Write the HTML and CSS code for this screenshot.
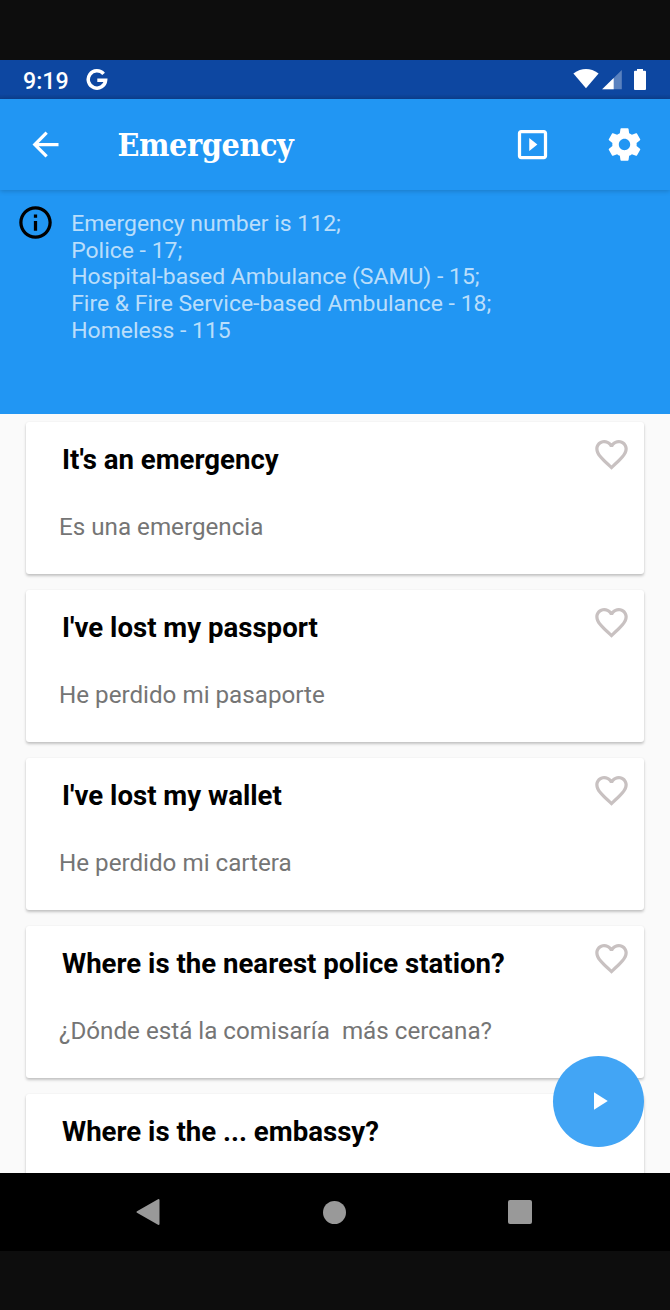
FILE: index.html
```html
<!DOCTYPE html>
<html lang="en">
<head>
<meta charset="utf-8">
<title>Emergency</title>
<link rel="stylesheet" href="styles.css">
</head>
<body>
<div class="device">
  <div class="status">
    <span class="clock">9:19</span>
    <svg class="google" width="22" height="22" viewBox="0 0 22 22"><path d="M17.600 4.900A8.700 8.700 0 1 0 19.600 11.300H11.300" fill="none" stroke="#fff" stroke-width="3.500"/></svg>
    <svg class="signals" width="76" height="24" viewBox="0 0 76 24">
      <path d="M.4 5.5Q13-3.4 25.6 5.5L13 20.3Z" fill="#fff"/>
      <path d="M48.8 2v19.2H29.2Z" fill="#fff" fill-opacity=".32"/>
      <path d="M40.7 9.9v11.3H29.2Z" fill="#fff"/>
      <path d="M64 1h6v1.8h2q1 0 1 1V21q0 1-1 1H62q-1 0-1-1V3.800q0-1 1-1h2Z" fill="#fff"/>
    </svg>
  </div>
  <header class="appbar">
    <svg class="icon" viewBox="0 0 24 24"><path d="M20 11H7.830l5.590-5.590L12 4l-8 8 8 8 1.410-1.410L7.830 13H20v-2z"/></svg>
    <h1 class="title">Emergency</h1>
    <svg class="icon slideshow" viewBox="0 0 24 24"><path d="M10 8v8l5-4-5-4zm9-5H5c-1.100 0-2 .9-2 2v14c0 1.100.9 2 2 2h14c1.100 0 2-.9 2-2V5c0-1.100-.9-2-2-2zm0 16H5V5h14v14z"/></svg>
    <svg class="icon" viewBox="0 0 24 24"><path d="M19.430 12.980c.04-.32.07-.64.07-.98s-.03-.66-.07-.98l2.110-1.650c.19-.15.24-.42.12-.64l-2-3.460c-.12-.22-.39-.3-.61-.22l-2.490 1c-.52-.4-1.080-.73-1.690-.98l-.38-2.650C14.460 2.180 14.250 2 14 2h-4c-.25 0-.46.18-.49.42l-.38 2.650c-.61.25-1.170.59-1.690.98l-2.490-1c-.23-.09-.49 0-.61.22l-2 3.460c-.13.22-.07.49.12.64l2.110 1.650c-.04.32-.07.65-.07.98s.03.66.07.98l-2.110 1.650c-.19.15-.24.42-.12.64l2 3.460c.12.22.39.3.61.22l2.490-1c.52.4 1.080.73 1.690.98l.38 2.650c.03.24.24.42.49.42h4c.25 0 .46-.18.49-.42l.38-2.650c.61-.25 1.170-.59 1.690-.98l2.490 1c.23.09.49 0 .61-.22l2-3.460c.12-.22.07-.49-.12-.64l-2.110-1.650zM12 15.500c-1.930 0-3.500-1.570-3.500-3.500s1.570-3.500 3.500-3.500 3.500 1.570 3.500 3.500-1.570 3.500-3.500 3.500z"/></svg>
  </header>
  <section class="info">
    <svg class="icon info-icon" viewBox="0 0 24 24"><path d="M11 17h2v-6h-2v6zm1-15C6.480 2 2 6.480 2 12s4.480 10 10 10 10-4.480 10-10S17.520 2 12 2zm0 18c-4.410 0-8-3.590-8-8s3.590-8 8-8 8 3.590 8 8-3.590 8-8 8zM11 9h2V7h-2v2z"/></svg>
    <p class="info-text">Emergency number is 112;<br>Police - 17;<br>Hospital-based Ambulance (SAMU) - 15;<br>Fire &amp; Fire Service-based Ambulance - 18;<br>Homeless - 115</p>
  </section>
  <svg class="defs" width="0" height="0"><symbol id="heart" viewBox="0 0 24 24"><path d="M16.500 3c-1.740 0-3.410.81-4.500 2.090C10.910 3.810 9.240 3 7.500 3 4.420 3 2 5.420 2 8.500c0 3.780 3.400 6.860 8.550 11.540L12 21.350l1.450-1.320C18.600 15.360 22 12.280 22 8.500 22 5.420 19.580 3 16.500 3zm-4.400 15.550l-.1.100-.1-.1C7.140 14.240 4 11.390 4 8.500 4 6.500 5.500 5 7.500 5c1.540 0 3.040.99 3.570 2.360h1.870C13.460 5.990 14.960 5 16.500 5c2 0 3.500 1.500 3.500 3.500 0 2.890-3.140 5.740-7.900 10.050z"/></symbol></svg>
  <main class="list">
    <article class="card"><h2 class="phrase">It's an emergency</h2><p class="translation">Es una emergencia</p><svg class="icon heart"><use href="#heart"/></svg></article>
    <article class="card"><h2 class="phrase">I've lost my passport</h2><p class="translation">He perdido mi pasaporte</p><svg class="icon heart"><use href="#heart"/></svg></article>
    <article class="card"><h2 class="phrase">I've lost my wallet</h2><p class="translation">He perdido mi cartera</p><svg class="icon heart"><use href="#heart"/></svg></article>
    <article class="card"><h2 class="phrase">Where is the nearest police station?</h2><p class="translation">¿Dónde está la comisaría&nbsp; más cercana?</p><svg class="icon heart"><use href="#heart"/></svg></article>
    <article class="card"><h2 class="phrase">Where is the ... embassy?</h2></article>
    <div class="fab"><svg class="play" width="30" height="30" viewBox="0 0 24 24" fill="#fff"><path d="M8 5v14l11-7z"/></svg></div>
  </main>
  <nav class="navbar">
    <svg width="26" height="28" viewBox="0 0 26 28"><path d="M2.500 14 23.500 2v24Z" fill="#999" stroke="#999" stroke-width="2" stroke-linejoin="round"/></svg>
    <span class="home"></span>
    <span class="recents"></span>
  </nav>
</div>
</body>
</html>
```

FILE: styles.css
```css
* { box-sizing: border-box; }
body { margin: 0; background: #0d0d0d; font-family: Roboto, sans-serif; }
h1, h2, p { margin: 0; }
.device { display: flex; flex-direction: column; width: 670px; height: 1310px; padding: 60px 0 59px; overflow: hidden; }
.icon { width: 39px; height: 39px; flex: none; fill: #fff; }
.defs { display: none; }

.status { height: 39px; flex: none; display: flex; align-items: center; padding: 0 23px; background: linear-gradient(#0d47a1 34px, #0d4190); color: #fff; }
.clock { width: 63px; font-size: 23.200px; font-weight: 500; line-height: 39px; padding-top: 3px; }
.google { margin-top: 1px; }
.signals { margin-left: auto; margin-right: -2px; }

.appbar { position: relative; height: 91px; flex: none; display: flex; align-items: center; padding: 0 26.300px 0 26px; background: #2196f3; box-shadow: 0 1px 5px rgba(0, 0, 0, .2); }
.title { margin-left: 52.500px; flex: 1; font-family: "DejaVu Serif Condensed", "DejaVu Serif", serif; font-stretch: condensed; font-weight: 700; font-size: 32px; line-height: 40px; letter-spacing: -.4px; color: #fff; }
.slideshow { margin-right: 53px; }

.info { height: 224px; flex: none; display: flex; padding: 13.400px 16px; background: #2196f3; }
.info-icon { fill: #000; }
.info-text { padding: 7.600px 0 0 16.200px; font-size: 22.950px; line-height: 26.660px; color: rgba(255, 255, 255, .7); }

.list { position: relative; flex: 1; min-height: 0; overflow: hidden; display: flex; flex-direction: column; gap: 16px; padding: 8.400px 26px 0; background: #fafafa; }
.card { height: 152px; flex: none; display: grid; grid-template: 74px 1fr / 1fr 39px; padding: 0 13.500px 0 33px; border-radius: 3px; background: #fff; box-shadow: 0 2px 3px rgba(0, 0, 0, .22), 0 0 2px rgba(0, 0, 0, .06); }
.phrase { padding-left: 3px; font-size: 27.600px; font-weight: 700; line-height: 75px; color: #000; white-space: nowrap; }
.translation { grid-area: 2 / 1; font-size: 24.200px; line-height: 63px; color: #757575; white-space: nowrap; }
.heart { grid-area: 1 / 2; margin-top: 13px; fill: #c8c1c1; }

.fab { position: absolute; right: 26px; bottom: 26px; width: 91px; height: 91px; border-radius: 50%; display: flex; align-items: center; justify-content: center; background: #42a5f5; }
.play { margin: 0 0 1px; }

.navbar { height: 78px; flex: none; display: flex; align-items: center; justify-content: space-between; padding: 0 138px 0 135px; background: #000; }
.home { width: 23px; height: 23px; border-radius: 50%; background: #999; }
.recents { width: 24px; height: 24px; border-radius: 2px; background: #999; }
```
